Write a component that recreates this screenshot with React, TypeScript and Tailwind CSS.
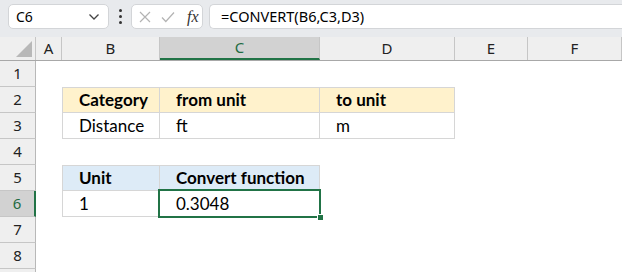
import React from "react";

const cols = [
  { key: "A", w: 26 },
  { key: "B", w: 98 },
  { key: "C", w: 160 },
  { key: "D", w: 135 },
  { key: "E", w: 73 },
  { key: "F", w: 94 },
];

const hdrFont = { fontFamily: '"Noto Sans", "Open Sans", sans-serif' };
const cellFont = { fontFamily: 'Lato, "Noto Sans", sans-serif' };

type Cell = { text: string; bold?: boolean; bg?: string; left?: boolean; top?: boolean };

function TableCell({ c, w, active }: { c?: Cell; w: number; active?: boolean }) {
  if (!c) return <div style={{ width: w }} className="h-full shrink-0" />;
  return (
    <div
      style={{ width: w }}
      className={`relative h-full shrink-0 box-border border-r border-b border-[#d6d6d6] ${c.left ? "border-l" : ""} ${c.top ? "border-t" : ""} ${c.bg ?? ""} flex items-center pl-[16px] text-[17px] text-black ${c.bold ? "font-bold" : ""}`}
    >
      <span style={cellFont}>{c.text}</span>
      {active && (
        <>
          <div className="absolute left-[-2px] top-[-2px] right-[-2px] bottom-[-2px] border-2 border-[#217346] pointer-events-none" />
          <div className="absolute right-[-5px] bottom-[-5px] w-[7px] h-[7px] bg-[#217346] border border-white" />
        </>
      )}
    </div>
  );
}

export default function App() {
  const rows: Record<number, Record<string, Cell>> = {
    2: {
      B: { text: "Category", bold: true, bg: "bg-[#fff2cc]", left: true, top: true },
      C: { text: "from unit", bold: true, bg: "bg-[#fff2cc]", top: true },
      D: { text: "to unit", bold: true, bg: "bg-[#fff2cc]", top: true },
    },
    3: {
      B: { text: "Distance", left: true },
      C: { text: "ft" },
      D: { text: "m" },
    },
    5: {
      B: { text: "Unit", bold: true, bg: "bg-[#ddebf7]", left: true, top: true },
      C: { text: "Convert function", bold: true, bg: "bg-[#ddebf7]", top: true },
    },
    6: {
      B: { text: "1", left: true },
      C: { text: "0.3048" },
    },
  };

  return (
    <div className="w-[622px] h-[272px] overflow-hidden bg-white relative">
      {/* Formula bar */}
      <div className="h-[37px] bg-[#e8eaed] flex items-start pt-[4px] pl-[8px]">
        <div className="w-[101px] h-[25px] bg-white border border-[#d3d5d8] rounded-[5px] flex items-center pl-[7px] pr-[8px] justify-between">
          <span style={hdrFont} className="text-[14px] text-black">C6</span>
          <svg width="12" height="8" viewBox="0 0 12 8">
            <path d="M1.5 1.5 L6 6 L10.5 1.5" fill="none" stroke="#444" strokeWidth="1.3" />
          </svg>
        </div>
        <div className="w-[22px] h-[25px] flex flex-col items-center justify-center gap-[3px]">
          <div className="w-[3px] h-[3px] bg-[#333] rounded-full" />
          <div className="w-[3px] h-[3px] bg-[#333] rounded-full" />
          <div className="w-[3px] h-[3px] bg-[#333] rounded-full" />
        </div>
        <div className="w-[72px] h-[25px] bg-white border border-[#d3d5d8] rounded-[5px] flex items-center pl-[7px] gap-[10px]">
          <svg width="12" height="12" viewBox="0 0 12 12">
            <path d="M1 1 L11 11 M11 1 L1 11" stroke="#b3b3b3" strokeWidth="1.2" fill="none" />
          </svg>
          <svg width="14" height="12" viewBox="0 0 14 12">
            <path d="M1 6.5 L4.8 10.5 L13 1.5" stroke="#b3b3b3" strokeWidth="1.2" fill="none" />
          </svg>
          <span className="text-[16px] italic text-[#333] ml-[2px]" style={{ fontFamily: '"Liberation Serif", "DejaVu Serif", serif' }}>
            fx
          </span>
        </div>
        <div className="ml-[6px] flex-1 h-[25px] bg-white border border-[#d3d5d8] rounded-l-[5px] border-r-0 flex items-center pl-[11px]">
          <span style={hdrFont} className="text-[14.5px] text-black">=CONVERT(B6,C3,D3)</span>
        </div>
      </div>

      {/* Column headers */}
      <div className="flex h-[24px] bg-[#efefef] border-b border-[#a8a8a8]" style={hdrFont}>
        <div className="w-[36px] shrink-0 h-full relative border-r border-[#c6c6c6]">
          <svg className="absolute right-[3px] bottom-[3px]" width="16" height="16" viewBox="0 0 16 16">
            <path d="M16 0 L16 16 L0 16 Z" fill="#b8b8b8" />
          </svg>
        </div>
        {cols.map((c) => (
          <div
            key={c.key}
            style={{ width: c.w }}
            className={`shrink-0 h-full flex items-center justify-center text-[15px] border-r border-[#c6c6c6] box-border ${
              c.key === "C" ? "bg-[#d2d2d2] text-[#1e6b41] border-b-2 border-b-[#217346]" : "text-[#222]"
            }`}
          >
            {c.key}
          </div>
        ))}
      </div>

      {/* Rows */}
      {[1, 2, 3, 4, 5, 6, 7, 8, 9].map((r) => (
        <div key={r} className="flex h-[26px]">
          <div
            style={hdrFont}
            className={`w-[36px] shrink-0 h-full box-border border-b border-[#c6c6c6] flex items-center justify-center text-[15px] ${
              r === 6
                ? "bg-[#d2d2d2] text-[#1e6b41] border-r-2 border-r-[#217346]"
                : "bg-[#efefef] text-[#222] border-r border-r-[#b8b8b8]"
            }`}
          >
            {r < 9 ? r : ""}
          </div>
          {cols.map((c) => (
            <TableCell key={c.key} c={rows[r]?.[c.key]} w={c.w} active={r === 6 && c.key === "C"} />
          ))}
        </div>
      ))}
    </div>
  );
}
